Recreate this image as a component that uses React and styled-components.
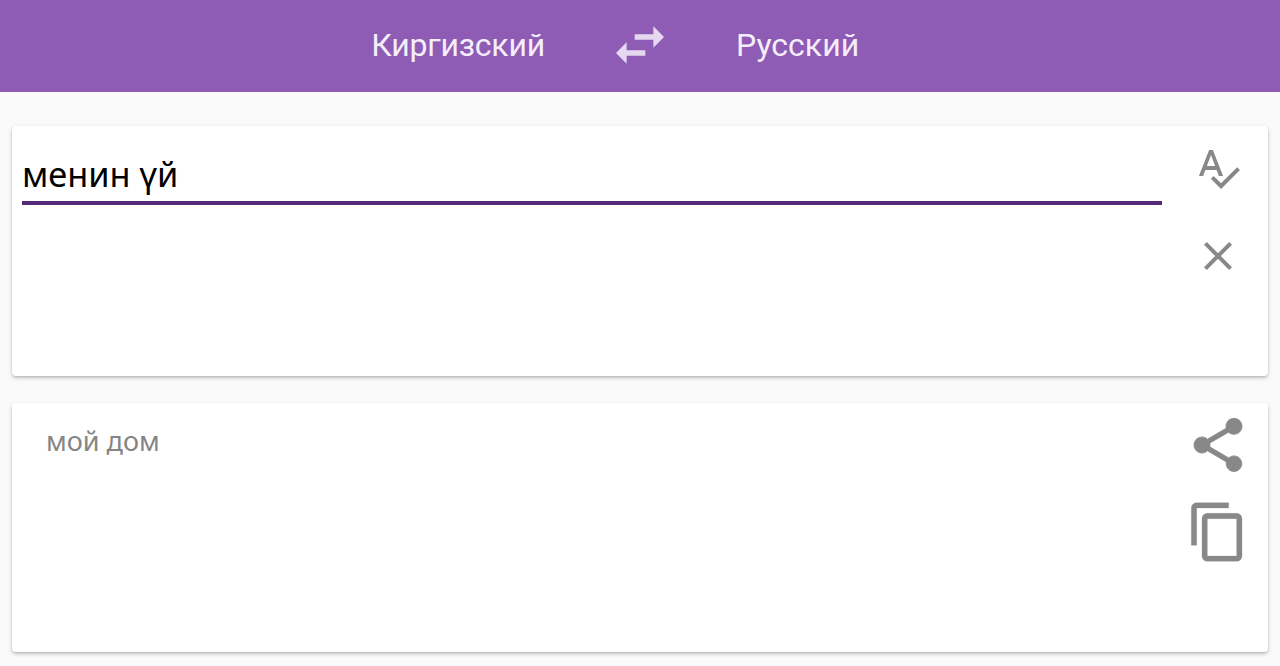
import React from "react";
import styled, { createGlobalStyle } from "styled-components";

const Global = createGlobalStyle`
  html, body { margin: 0; padding: 0; background: #fafafa; overflow: hidden; }
  body { font-family: "Noto Sans", sans-serif; }
`;

const Page = styled.div`
  width: 1280px;
  height: 666px;
  display: flex;
  flex-direction: column;
  background: #fafafa;
`;

const Header = styled.header`
  height: 92px;
  flex: none;
  background: #8e5bb5;
  display: grid;
  grid-template-columns: 608px 64px 1fr;
  align-items: center;
`;

const Lang = styled.span`
  font-family: Roboto, sans-serif;
  font-size: 32px;
  line-height: 38px;
  color: #f5eefa;
  letter-spacing: ${(p) => (p.$end ? "-0.2px" : "0")};
  justify-self: ${(p) => (p.$end ? "end" : "start")};
  margin: ${(p) => (p.$end ? "-3px 63px 0 0" : "-3px 0 0 64px")};
`;

const SwapIcon = styled.svg`
  width: 64px;
  height: 64px;
  margin-top: -2px;
  fill: #e6d8f0;
  display: block;
`;

const Cards = styled.main`
  display: flex;
  flex-direction: column;
  gap: 27px;
  padding: 34px 12px 0;
`;

const Card = styled.section`
  height: 249.5px;
  background: #fff;
  border-radius: 4px;
  box-shadow: 0 1px 2px rgba(0, 0, 0, 0.12), 0 2px 4px rgba(0, 0, 0, 0.2);
  display: flex;
  justify-content: space-between;
`;

const Field = styled.div`
  width: 1140px;
  height: 79px;
  margin-left: 10px;
  box-sizing: border-box;
  border-bottom: 4px solid #55287a;
  font-size: 34.3px;
  line-height: 47px;
  padding-top: 24px;
  color: #000;
`;

const Result = styled.div`
  font-size: 27px;
  line-height: 36px;
  color: #858585;
  padding: 20px 0 0 34px;
`;

const Actions = styled.div`
  display: flex;
  flex-direction: column;
  align-items: center;
  gap: ${(p) => p.$gap}px;
  padding: ${(p) => p.$top}px ${(p) => p.$right}px 0 0;
`;

const Icon = styled.svg`
  width: ${(p) => p.$size}px;
  height: ${(p) => p.$size}px;
  fill: #888888;
  stroke: #888888;
  stroke-width: ${(p) => p.$weight || 0};
  display: block;
`;

export default function App() {
  return (
    <Page>
      <Global />
      <Header>
        <Lang $end>Киргизский</Lang>
        <SwapIcon viewBox="0 0 24 24">
          <path d="M6.99 11L3 15l3.99 4v-3H14v-2H6.99v-3zM21 9l-3.99-4v3H10v2h7.01v3L21 9z" />
        </SwapIcon>
        <Lang>Русский</Lang>
      </Header>
      <Cards>
        <Card>
          <Field>менин үй</Field>
          <Actions $top={18} $right={26} $gap={40}>
            <Icon $size={48} viewBox="0 0 24 24">
              <path d="M12.45 16h2.09L9.43 3H7.57L2.46 16h2.09l1.12-3h5.64l1.14 3zm-6.02-5L8.5 5.48 10.57 11H6.43zm15.16.59l-8.09 8.09L9.83 16l-1.41 1.41 5.09 5.09L23 13l-1.41-1.41z" />
            </Icon>
            <Icon $size={48} viewBox="0 0 24 24">
              <path d="M19 6.41L17.59 5 12 10.59 6.41 5 5 6.41 10.59 12 5 17.59 6.41 19 12 13.41 17.59 19 19 17.59 13.41 12z" />
            </Icon>
          </Actions>
        </Card>
        <Card>
          <Result>мой дом</Result>
          <Actions $top={10} $right={18} $gap={23}>
            <Icon $size={64} $weight={0.3} viewBox="0 0 24 24">
              <path d="M18 16.08c-.76 0-1.44.3-1.96.77L8.91 12.7c.05-.23.09-.46.09-.7s-.04-.47-.09-.7l7.05-4.11c.54.5 1.25.81 2.04.81 1.66 0 3-1.34 3-3s-1.34-3-3-3-3 1.34-3 3c0 .24.04.47.09.7L8.04 9.81C7.5 9.31 6.79 9 6 9c-1.66 0-3 1.34-3 3s1.34 3 3 3c.79 0 1.5-.31 2.04-.81l7.12 4.16c-.05.21-.08.43-.08.65 0 1.61 1.31 2.92 2.92 2.92 1.61 0 2.92-1.31 2.92-2.92s-1.31-2.92-2.92-2.92z" />
            </Icon>
            <Icon $size={64} $weight={0.1} viewBox="0 0 24 24">
              <path d="M16 1H4c-1.1 0-2 .9-2 2v14h2V3h12V1zm3 4H8c-1.1 0-2 .9-2 2v14c0 1.1.9 2 2 2h11c1.1 0 2-.9 2-2V7c0-1.1-.9-2-2-2zm0 16H8V7h11v14z" />
            </Icon>
          </Actions>
        </Card>
      </Cards>
    </Page>
  );
}
